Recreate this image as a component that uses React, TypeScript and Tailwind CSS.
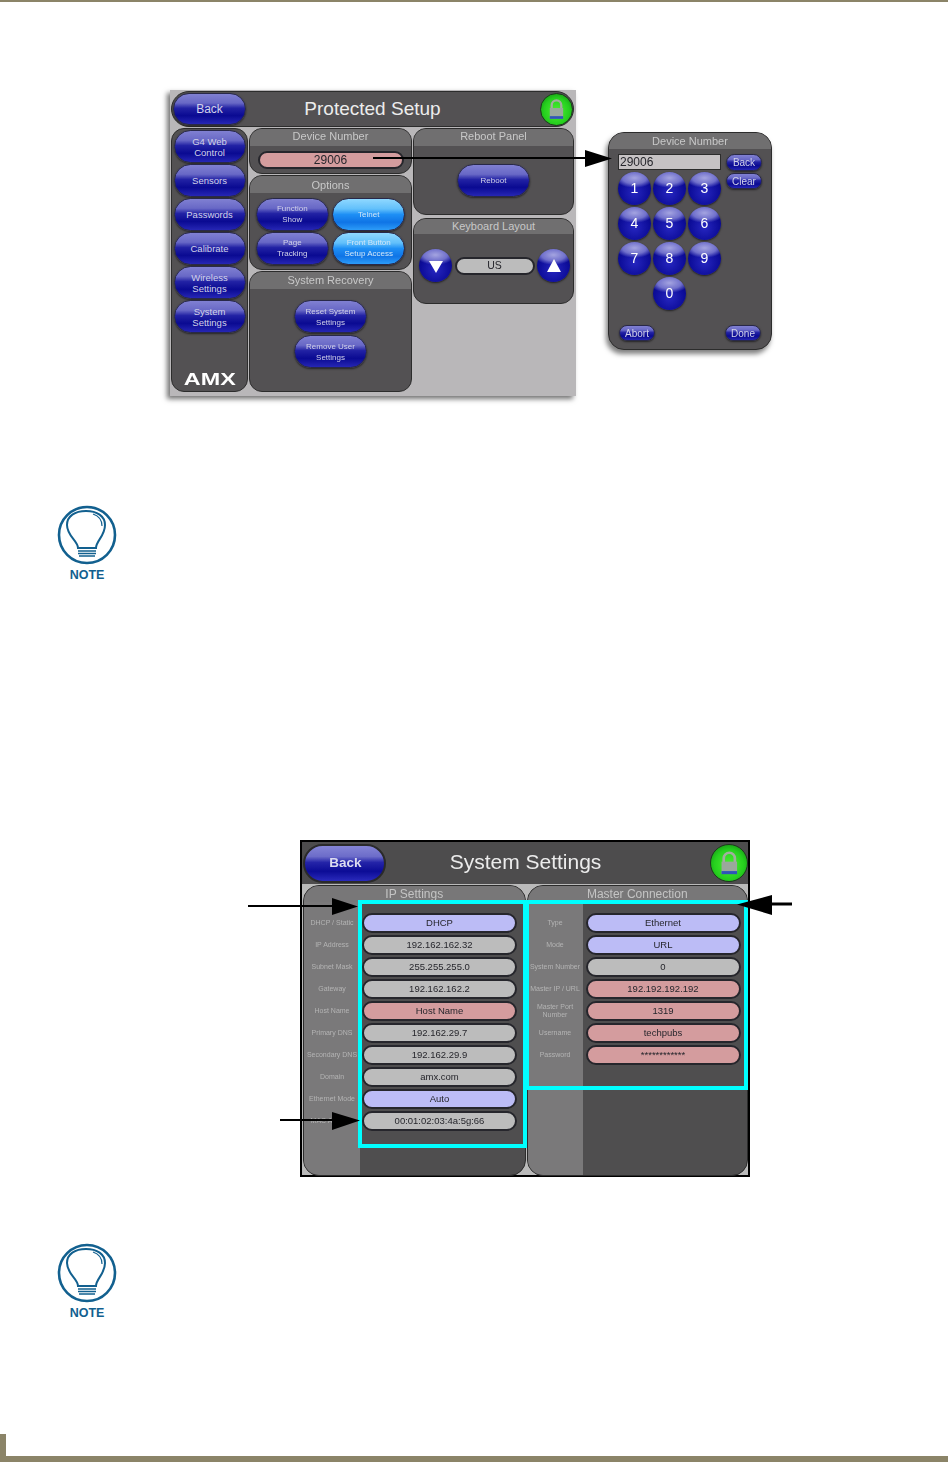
import React from "react";

const pillBlue =
  "bg-[linear-gradient(180deg,#8080d2_0%,#6868c6_30%,#2222a4_47%,#0a0a92_72%,#2626b4_100%)] text-[#d2d2ea]";
const pillLight =
  "bg-[linear-gradient(180deg,#8fd8ff_0%,#62c0fb_32%,#1e8ff5_50%,#0f74e6_75%,#2c9cf8_100%)] text-[#d0e6f8]";

function Pill({ children, className = "", light = false }: { children: React.ReactNode; className?: string; light?: boolean }) {
  return (
    <div
      className={`flex flex-col items-center justify-center rounded-full border border-[#28284a] text-center leading-[11px] shadow-[0_1px_2px_rgba(0,0,0,0.55)] ${light ? pillLight : pillBlue} ${className}`}
    >
      {children}
    </div>
  );
}

function Ball({ children, size = "w-[33px] h-[33px]" }: { children: React.ReactNode; size?: string }) {
  return (
    <div
      className={`flex items-center justify-center rounded-full text-[14px] text-white shadow-[0_1px_2px_rgba(0,0,0,0.6)] bg-[radial-gradient(ellipse_60%_30%_at_50%_18%,#a4a4e0_0%,#7070cc_60%,transparent_100%),radial-gradient(circle_at_50%_62%,#2626c0_0%,#0c0c98_58%,#04045e_100%)] ${size}`}
    >
      {children}
    </div>
  );
}

function Lock({ size }: { size: string }) {
  return (
    <div
      className={`flex items-center justify-center rounded-full border border-[#1c3a1c] bg-[radial-gradient(circle_at_50%_55%,#4cf032_0%,#26d01e_55%,#0c7c10_100%)] ${size}`}
    >
      <svg viewBox="0 0 24 24" className="h-[74%] w-[74%]">
        <path d="M7 11V7.500a5 5 0 0 1 10 0V11" fill="none" stroke="#a2ae9e" strokeWidth="2.4" />
        <rect x="5" y="10.500" width="14" height="11" fill="#9aa89c" />
        <rect x="5" y="19" width="14" height="2.800" fill="#2f55b8" />
      </svg>
    </div>
  );
}

function Panel({
  title,
  className = "",
  headH = "h-[17px]",
  children,
}: {
  title: string;
  className?: string;
  headH?: string;
  children?: React.ReactNode;
}) {
  return (
    <div className={`flex flex-col overflow-hidden rounded-[13px] border border-[#2c2c2c] bg-[#535153] ${className}`}>
      <div className={`flex shrink-0 items-center justify-center bg-[#706f70] text-[11px] text-[#c8c8c8] ${headH}`}>{title}</div>
      {children}
    </div>
  );
}

function Field({ children, tone, className = "" }: { children: React.ReactNode; tone: "gray" | "pink" | "blue"; className?: string }) {
  const c = tone === "gray" ? "bg-[#bcbcbc]" : tone === "pink" ? "bg-[#d49c9e]" : "bg-[#bcbcf6]";
  return (
    <div className={`flex items-center justify-center rounded-full border-2 border-[#26262c] text-[#26262c] ${c} ${className}`}>
      {children}
    </div>
  );
}

function NoteIcon() {
  return (
    <div className="ml-[57px] flex w-[60px] flex-col items-center">
      <svg viewBox="0 0 60 60" className="h-[60px] w-[60px]" fill="none" stroke="#12608f">
        <circle cx="30" cy="30" r="28" strokeWidth="2.600" />
        <path d="M21 43C21 36 10 31 10 20C10 11 18 6 29 6C40 6 48 11 48 20C48 31 39 36 39 43Z" strokeWidth="2" />
        <path d="M36 9C42 11 45 15 45 21" strokeWidth="1.200" />
        <path d="M21 46H39M21 48.500H39M22 51H38" strokeWidth="1.400" />
      </svg>
      <div className="mt-[3px] text-[12.5px] font-bold leading-[15px] text-[#12608f]">NOTE</div>
    </div>
  );
}

const ipRows: [string, string, "gray" | "pink" | "blue"][] = [
  ["DHCP / Static", "DHCP", "blue"],
  ["IP Address", "192.162.162.32", "gray"],
  ["Subnet Mask", "255.255.255.0", "gray"],
  ["Gateway", "192.162.162.2", "gray"],
  ["Host Name", "Host Name", "pink"],
  ["Primary DNS", "192.162.29.7", "gray"],
  ["Secondary DNS", "192.162.29.9", "gray"],
  ["Domain", "amx.com", "gray"],
  ["Ethernet Mode", "Auto", "blue"],
  ["MAC Address", "00:01:02:03:4a:5g:66", "gray"],
];
const masterRows: [string, string, "gray" | "pink" | "blue"][] = [
  ["Type", "Ethernet", "blue"],
  ["Mode", "URL", "blue"],
  ["System Number", "0", "gray"],
  ["Master IP / URL", "192.192.192.192", "pink"],
  ["Master Port Number", "1319", "pink"],
  ["Username", "techpubs", "pink"],
  ["Password", "************", "pink"],
];

function SettingsPanel({
  title,
  rows,
  width,
  labelW,
  gap,
}: {
  title: string;
  rows: [string, string, "gray" | "pink" | "blue"][];
  width: string;
  labelW: string;
  gap: string;
}) {
  return (
    <div className={`flex h-[291px] flex-col overflow-hidden rounded-[16px] border border-[#2c2c2c] bg-[#4f4e4f] ${width}`}>
      <div className="flex h-[16px] shrink-0 items-center justify-center bg-[#787778] text-[12px] text-[#c4c4c4]">{title}</div>
      <div className="flex flex-1">
        <div className={`flex shrink-0 flex-col bg-[#7a797a] pt-[10px] ${labelW}`}>
          {rows.map((r) => (
            <div key={r[0]} className="flex h-[22px] items-center justify-center text-center text-[7px] leading-[8px] text-[#b4b4b4]">
              {r[0]}
            </div>
          ))}
        </div>
        <div className={`flex flex-1 flex-col pt-[10px] ${gap}`}>
          {rows.map((r) => (
            <div key={r[0]} className="flex h-[22px] items-center">
              <Field tone={r[2]} className="h-[20px] w-[155px] text-[9.5px]">
                {r[1]}
              </Field>
            </div>
          ))}
        </div>
      </div>
    </div>
  );
}

export default function App() {
  return (
    <div className="relative flex h-[1462px] w-[948px] flex-col overflow-hidden bg-white font-['Liberation_Sans',Arial,sans-serif]">
      <div className="h-[2px] shrink-0 bg-[#8b8468]" />

      {/* Protected Setup + keypad */}
      <div className="ml-[170px] mt-[88px] flex h-[306px] shrink-0 items-start blur-[0.35px]">
        <div className="h-[306px] w-[406px] bg-[#b9b7b9] pl-[1px] pt-[1px] shadow-[-3px_3px_5px_rgba(0,0,0,0.55)]">
          <div className="grid h-[36px] w-[403px] grid-cols-[76px_1fr_76px] items-center rounded-[18px] border border-[#2c2c2c] bg-[#535153]">
            <Pill className="ml-[1px] h-[32px] w-[73px] text-[12px]">Back</Pill>
            <div className="pb-[2px] text-center text-[19px] leading-none text-[#ececec]">Protected Setup</div>
            <div className="flex justify-end">
              <Lock size="h-[33px] w-[33px]" />
            </div>
          </div>
          <div className="mt-[1px] flex gap-[1px]">
            <div className="flex h-[264px] w-[77px] flex-col items-center gap-[1px] rounded-[13px] border border-[#2c2c2c] bg-[#535153] pt-[1px]">
              <Pill className="h-[33px] w-[72px] text-[9.5px]">
                <span>G4 Web</span>
                <span>Control</span>
              </Pill>
              <Pill className="h-[33px] w-[72px] text-[9.5px]">Sensors</Pill>
              <Pill className="h-[33px] w-[72px] text-[9.5px]">Passwords</Pill>
              <Pill className="h-[33px] w-[72px] text-[9.5px]">Calibrate</Pill>
              <Pill className="h-[33px] w-[72px] text-[9.5px]">
                <span>Wireless</span>
                <span>Settings</span>
              </Pill>
              <Pill className="h-[33px] w-[72px] text-[9.5px]">
                <span>System</span>
                <span>Settings</span>
              </Pill>
              <div className="mb-[4px] mt-auto origin-center scale-x-[1.46] text-[16px] font-bold leading-[15px] text-white">AMX</div>
            </div>
            <div className="flex h-[264px] w-[163px] flex-col gap-[1px]">
              <Panel title="Device Number" headH="h-[17px] pb-[2px]" className="h-[46px]">
                <div className="flex flex-1 items-center justify-center">
                  <Field tone="pink" className="h-[18px] w-[146px] text-[12px]">
                    29006
                  </Field>
                </div>
              </Panel>
              <Panel title="Options" headH="h-[17px] pt-[2px]" className="h-[95px]">
                <div className="grid flex-1 grid-cols-2 content-center justify-items-center gap-y-[1px] px-[4px]">
                  <Pill className="h-[33px] w-[73px] text-[8px]">
                    <span>Function</span>
                    <span>Show</span>
                  </Pill>
                  <Pill light className="h-[33px] w-[73px] text-[8px]">
                    Telnet
                  </Pill>
                  <Pill className="h-[33px] w-[73px] text-[8px]">
                    <span>Page</span>
                    <span>Tracking</span>
                  </Pill>
                  <Pill light className="h-[33px] w-[73px] text-[8px]">
                    <span>Front Button</span>
                    <span>Setup Access</span>
                  </Pill>
                </div>
              </Panel>
              <Panel title="System Recovery" className="flex-1">
                <div className="flex flex-col items-center gap-[2px] pt-[11px]">
                  <Pill className="h-[33px] w-[73px] text-[8px]">
                    <span>Reset System</span>
                    <span>Settings</span>
                  </Pill>
                  <Pill className="h-[33px] w-[73px] text-[8px]">
                    <span>Remove User</span>
                    <span>Settings</span>
                  </Pill>
                </div>
              </Panel>
            </div>
            <div className="flex w-[161px] flex-col gap-[3px]">
              <Panel title="Reboot Panel" headH="h-[17px] pb-[2px]" className="h-[87px]">
                <div className="flex justify-center pt-[18px]">
                  <Pill className="h-[33px] w-[73px] text-[8px]">Reboot</Pill>
                </div>
              </Panel>
              <Panel title="Keyboard Layout" headH="h-[15px]" className="h-[86px]">
                <div className="flex items-center justify-between pl-[5px] pr-[3px] pt-[15px]">
                  <Ball>
                    <svg viewBox="0 0 20 20" className="h-[20px] w-[20px]">
                      <path d="M3 5H17L10 17Z" fill="white" />
                    </svg>
                  </Ball>
                  <Field tone="gray" className="h-[18px] w-[80px] text-[10.5px]">
                    US
                  </Field>
                  <Ball>
                    <svg viewBox="0 0 20 20" className="h-[20px] w-[20px]">
                      <path d="M3 16H17L10 3Z" fill="white" />
                    </svg>
                  </Ball>
                </div>
              </Panel>
            </div>
          </div>
        </div>

        <div className="ml-[32px] mt-[42px] flex h-[218px] w-[164px] flex-col overflow-hidden rounded-[16px] border border-[#2c2c2c] bg-[#535153] shadow-[-2px_4px_5px_rgba(0,0,0,0.5)]">
          <div className="flex h-[16px] shrink-0 items-center justify-center bg-[#706f70] text-[11px] text-[#c8c8c8]">Device Number</div>
          <div className="flex flex-1 flex-col px-[9px] pb-[8px] pt-[5px]">
            <div className="flex">
              <div className="w-[106px]">
                <div className="flex h-[16px] items-center border border-[#2c2c2c] bg-[#c6c2c4] px-[1px] text-[12px] leading-none text-[#26262c]">29006</div>
                <div className="mt-[2px] grid grid-cols-[33px_33px_33px] gap-[2px]">
                  {["1", "2", "3", "4", "5", "6", "7", "8", "9"].map((d) => (
                    <Ball key={d}>{d}</Ball>
                  ))}
                  <div className="col-start-2">
                    <Ball>0</Ball>
                  </div>
                </div>
              </div>
              <div className="ml-[5px] flex flex-col gap-[2px]">
                <Pill className="h-[17px] w-[36px] text-[10px]">Back</Pill>
                <Pill className="h-[16px] w-[36px] text-[10px]">Clear</Pill>
              </div>
            </div>
            <div className="mt-auto flex justify-between px-[1px]">
              <Pill className="h-[16px] w-[36px] text-[10px]">Abort</Pill>
              <Pill className="h-[16px] w-[36px] text-[10px]">Done</Pill>
            </div>
          </div>
        </div>
      </div>

      <div className="mt-[109px] shrink-0">
        <NoteIcon />
      </div>

      {/* System Settings */}
      <div className="ml-[300px] mt-[257px] h-[337px] w-[450px] shrink-0 border-2 border-black bg-[#bababa] blur-[0.35px]">
        <div className="grid h-[42px] grid-cols-[84px_1fr_84px] items-center bg-[#4d4c4d] pl-[1px]">
          <div className="flex h-[39px] w-[83px] items-center justify-center rounded-full border-2 border-[#2a2a2a] bg-[linear-gradient(180deg,#8585d6_0%,#6c6cc9_30%,#2424a8_47%,#0c0c96_72%,#2a2abc_100%)] pl-[2px] text-[13.5px] font-bold text-[#dcdcf0]">
            Back
          </div>
          <div className="pb-[4px] text-center text-[21px] leading-none text-[#ececec]">System Settings</div>
          <div className="flex justify-end">
            <Lock size="h-[38px] w-[38px]" />
          </div>
        </div>
        <div className="flex gap-[1px] pl-[1px] pt-[1px]">
          <SettingsPanel title="IP Settings" rows={ipRows} width="w-[223px]" labelW="w-[56px]" gap="pl-[2px]" />
          <SettingsPanel title="Master Connection" rows={masterRows} width="w-[222px]" labelW="w-[55px]" gap="pl-[3px]" />
        </div>
      </div>

      <div className="mt-[66px] shrink-0">
        <NoteIcon />
      </div>

      <div className="mt-auto h-[22px] w-[6px] shrink-0 bg-[#8b8468]" />
      <div className="h-[6px] shrink-0 bg-[#8b8468]" />

      {/* Callouts lying over the figures */}
      <div className="absolute left-[358px] top-[900px] h-[248px] w-[169px] border-4 border-[#00ffff]" />
      <div className="absolute left-[525px] top-[900px] h-[190px] w-[223px] border-4 border-[#00ffff]" />
      <svg className="absolute left-0 top-0 h-[1462px] w-[948px]" viewBox="0 0 948 1462">
        <path d="M373 158H590" stroke="black" strokeWidth="2" />
        <path d="M585 150L612 158.500L585 167Z" fill="black" />
        <path d="M248 906H336" stroke="black" strokeWidth="2" />
        <path d="M332 898L358 906.500L332 915Z" fill="black" />
        <path d="M280 1120H336" stroke="black" strokeWidth="2" />
        <path d="M332 1112L360 1120.500L332 1130Z" fill="black" />
        <path d="M768 904H792" stroke="black" strokeWidth="3" />
        <path d="M772 895L737 904.500L772 915Z" fill="black" />
      </svg>
    </div>
  );
}
